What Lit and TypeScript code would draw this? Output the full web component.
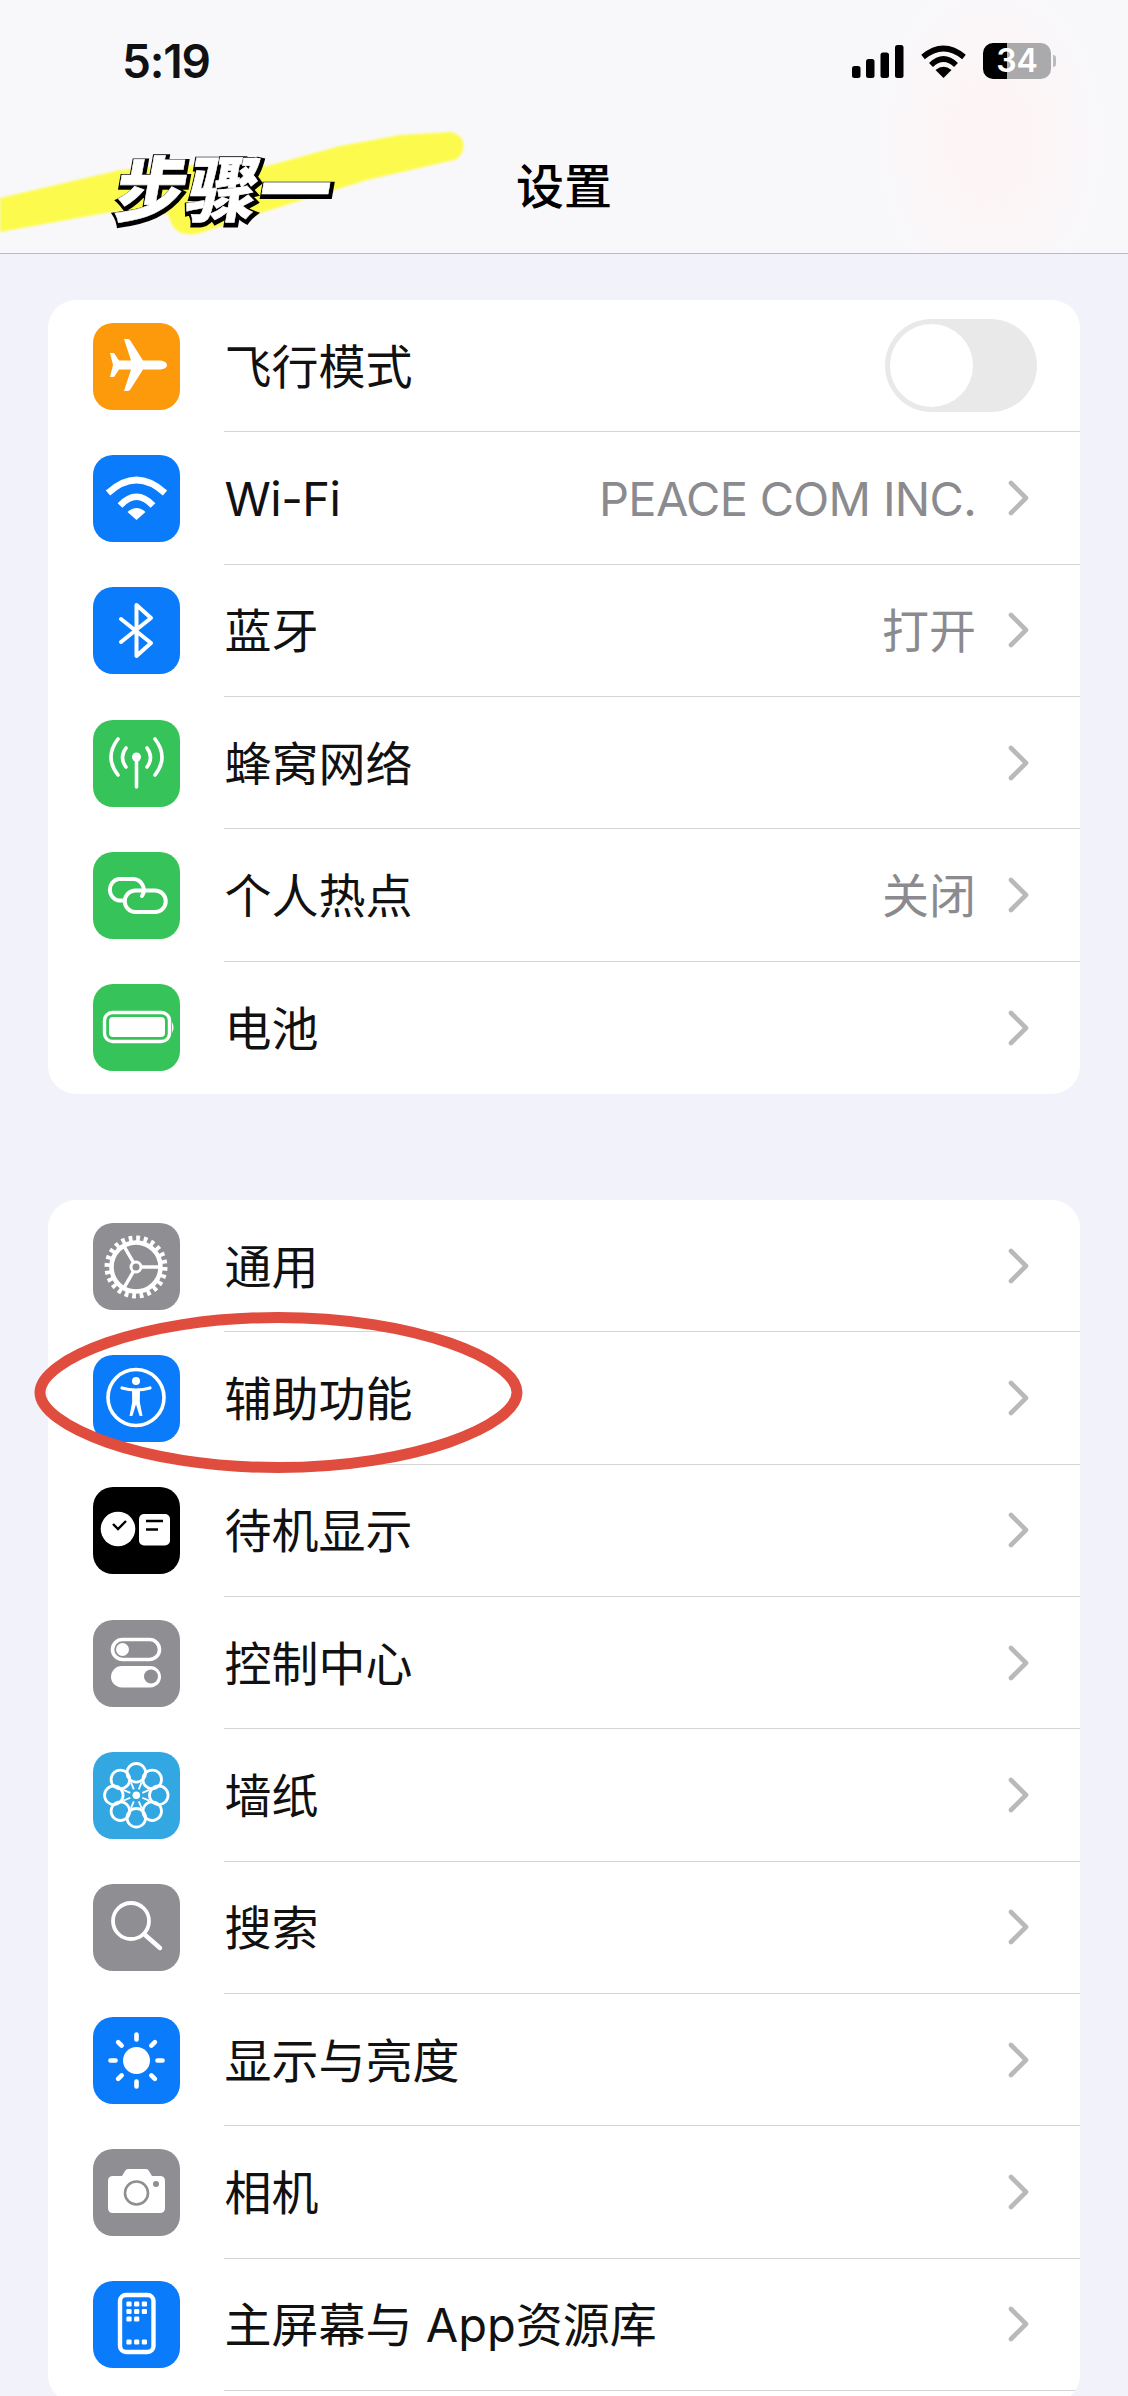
import { LitElement, html, css, svg } from "lit";
import { customElement } from "lit/decorators.js";

const polar = (r: number, deg: number, c = 43.5) => {
  const a = (deg * Math.PI) / 180;
  return [c + r * Math.cos(a), c + r * Math.sin(a)];
};

const eight = [0, 1, 2, 3, 4, 5, 6, 7];

const icons: Record<string, any> = {
  plane: svg`<path fill="#fff" d="M74 42C74 39 70 37.5 66 37.5L50 37.5L37 17Q36 16 34 16L31 16L38 37.5L26 37.5L21 30L17 30L20 42L17 54L21 54L26 46.5L38 46.5L31 68L34 68Q36 68 37 67L50 46.5L66 46.5C70 46.5 74 45 74 42Z"/>`,
  wifi: svg`<g fill="none" stroke="#fff" stroke-width="6.5"><path d="M15 38Q43.5 12 72 38"/><path d="M27 50.5Q43.5 33 60 50.5"/></g><path fill="#fff" d="M34.5 57Q43.5 49 52.5 57L43.5 65Z"/>`,
  bt: svg`<path fill="none" stroke="#fff" stroke-width="4" stroke-linejoin="round" stroke-linecap="round" d="M28 32L58 56L43.5 69V18L58 31L28 55"/>`,
  cell: svg`<g fill="none" stroke="#fff" stroke-width="3.6" stroke-linecap="round"><path d="M33 28Q26 37.5 33 47"/><path d="M25 19Q11 37 25 55"/><path d="M54 28Q61 37.5 54 47"/><path d="M62 19Q76 37 62 55"/><path d="M43.5 38V67"/></g><circle cx="43.5" cy="37" r="4.5" fill="#fff"/>`,
  link: svg`<g fill="none" stroke="#fff" stroke-width="4" stroke-linecap="round"><path d="M31 48.5H25.5A11 11 0 0 1 25.5 27H40A11 11 0 0 1 49 44"/><path d="M62 38.5H42.5A10.7 10.7 0 0 0 42.5 60H62A10.7 10.7 0 0 0 62 38.5Z"/></g>`,
  battery: svg`<rect x="11.5" y="28.5" width="65" height="29" rx="8" fill="none" stroke="#fff" stroke-width="3.4"/><rect x="16" y="33" width="56" height="20" rx="4" fill="#fff"/><path fill="#fff" d="M79 38Q82 43.5 79 49Z"/>`,
  gear: svg`<g fill="none" stroke="#fff"><circle cx="43" cy="44" r="28.5" stroke-width="6" stroke-dasharray="3.73 3.73"/><circle cx="43" cy="44" r="24.5" stroke-width="4.6"/><circle cx="43" cy="44" r="5" stroke-width="3"/><path stroke-width="3.4" d="M48 44H68M40.5 48.3L30.5 65.7M40.5 39.7L30.5 22.3"/></g>`,
  access: svg`<circle cx="43" cy="42.5" r="28" fill="none" stroke="#fff" stroke-width="3.6"/><circle cx="43" cy="26" r="4" fill="#fff"/><path fill="none" stroke="#fff" stroke-width="3.2" stroke-linecap="round" d="M29 33Q43 37 57 33"/><path fill="#fff" d="M39 35H47L46.8 47L49.5 61H46.6L43 49.5L39.4 61H36.5L39.2 47Z"/>`,
  standby: svg`<circle cx="25" cy="42" r="17.3" fill="#fff"/><path fill="none" stroke="#000" stroke-width="2.4" d="M20 37L25 42L33 34"/><rect x="46" y="27" width="31" height="31.5" rx="5" fill="#fff"/><path stroke="#000" stroke-width="2.4" d="M53 34H70M53 42.5H65"/>`,
  control: svg`<rect x="19.5" y="19.5" width="47" height="20" rx="10" fill="none" stroke="#fff" stroke-width="3.6"/><circle cx="29.5" cy="29.5" r="6.5" fill="#fff"/><rect x="18" y="46" width="50" height="21.5" rx="10.7" fill="#fff"/><circle cx="58" cy="56.5" r="7" fill="#8e8e93"/>`,
  flower: svg`${eight.map((i) => {
    const [x, y] = polar(22.5, i * 45 - 90, 43.3);
    return svg`<circle cx="${x}" cy="${y}" r="9.3" fill="none" stroke="#fff" stroke-width="2.8"/>`;
  })}${eight.map((i) => {
    const [a, b] = polar(6.5, i * 45 - 67.5, 43.3);
    const [c, d] = polar(14, i * 45 - 67.5, 43.3);
    return svg`<line x1="${a}" y1="${b}" x2="${c}" y2="${d}" stroke="#fff" stroke-width="1.8"/>`;
  })}<circle cx="43.3" cy="43.3" r="3.8" fill="#fff"/>`,
  search: svg`<g fill="none" stroke="#fff" stroke-linecap="round"><circle cx="38" cy="37" r="18" stroke-width="3.8"/><path stroke-width="4.4" d="M51 50L67 64"/></g>`,
  sun: svg`<circle cx="43.5" cy="43.5" r="13.5" fill="#fff"/>${eight.map((i) => {
    const [a, b] = polar(21, i * 45);
    const [c, d] = polar(26, i * 45);
    return svg`<line x1="${a}" y1="${b}" x2="${c}" y2="${d}" stroke="#fff" stroke-width="4.6" stroke-linecap="round"/>`;
  })}`,
  camera: svg`<path fill="#fff" d="M20 27H29L32 22Q33 20 35 20H53Q55 20 56 22L59 27H67Q72 27 72 32V59Q72 64 67 64H20Q15 64 15 59V32Q15 27 20 27Z"/><circle cx="43.5" cy="44" r="11.5" fill="none" stroke="#8e8e93" stroke-width="2.6"/><circle cx="63" cy="35" r="3" fill="#8e8e93"/>`,
  home: svg`<rect x="27" y="14" width="33.5" height="57" rx="6" fill="none" stroke="#fff" stroke-width="4.4"/>${[
    [36, 23], [43.7, 23], [51.4, 23],
    [36, 30.5], [43.7, 30.5], [51.4, 30.5],
    [36, 38], [43.7, 38],
    [36, 61], [43.7, 61], [51.4, 61],
  ].map(([x, y]) => svg`<rect x="${x - 2.6}" y="${y - 2.4}" width="5.2" height="4.8" rx="1.2" fill="#fff"/>`)}`,
};

type Row = { label: string; icon: string; bg: string; value?: string; toggle?: boolean };

const group1: Row[] = [
  { label: "飞行模式", icon: "plane", bg: "#fd9a0c", toggle: true },
  { label: "Wi-Fi", icon: "wifi", bg: "#0a7cfb", value: "PEACE COM INC." },
  { label: "蓝牙", icon: "bt", bg: "#0a7cfb", value: "打开" },
  { label: "蜂窝网络", icon: "cell", bg: "#36c35a" },
  { label: "个人热点", icon: "link", bg: "#36c35a", value: "关闭" },
  { label: "电池", icon: "battery", bg: "#36c35a" },
];

const group2: Row[] = [
  { label: "通用", icon: "gear", bg: "#8e8e93" },
  { label: "辅助功能", icon: "access", bg: "#0a7cfb" },
  { label: "待机显示", icon: "standby", bg: "#000" },
  { label: "控制中心", icon: "control", bg: "#8e8e93" },
  { label: "墙纸", icon: "flower", bg: "#32a7e2" },
  { label: "搜索", icon: "search", bg: "#8e8e93" },
  { label: "显示与亮度", icon: "sun", bg: "#0a7cfb" },
  { label: "相机", icon: "camera", bg: "#8e8e93" },
  { label: "主屏幕与 App资源库", icon: "home", bg: "#0a7cfb" },
];

const isLatin = (s: string) => /^[\x20-\x7e]+$/.test(s);

@customElement("app-root")
export class AppRoot extends LitElement {
  static styles = css`
    :host {
      display: block;
      position: relative;
      width: 1128px;
      height: 2396px;
      overflow: hidden;
      background: #f2f2fa;
      color: #111;
      font-family: Inter, "Noto Sans CJK SC", sans-serif;
    }
    .header {
      position: relative;
      height: 253px;
      box-sizing: content-box;
      border-bottom: 1px solid #bcbcc0;
      background: radial-gradient(ellipse 120px 170px at 990px 140px, #fdf5f5 30%, rgba(253, 245, 245, 0) 100%), #f8f8fb;
    }
    .status {
      display: flex;
      align-items: center;
      justify-content: space-between;
      height: 36px;
      padding: 43px 72px 0 122px;
    }
    .time {
      font-size: 46px;
      line-height: 36px;
      font-weight: 600;
      letter-spacing: -1.2px;
    }
    .status-icons {
      display: flex;
      align-items: center;
      gap: 17px;
    }
    .status-icons svg {
      display: block;
    }
    .battery {
      position: relative;
      width: 68px;
      height: 36px;
      border-radius: 10px;
      margin-right: 5px;
      background: linear-gradient(90deg, #000 0 24px, #aaaaac 24px);
      color: #fff;
      font-family: Inter, sans-serif;
      font-size: 32px;
      font-weight: 600;
      line-height: 36px;
      text-align: center;
    }
    .battery::after {
      content: "";
      position: absolute;
      left: 70px;
      top: 12px;
      width: 3px;
      height: 12px;
      border-radius: 0 3px 3px 0;
      background: #bbb;
    }
    .nav {
      display: flex;
      justify-content: center;
      margin-top: 84px;
      font-size: 48px;
      line-height: 48px;
      font-weight: 500;
      color: #000;
    }
    .marker {
      position: absolute;
      left: 0;
      top: 0;
      filter: blur(0.8px);
    }
    .sticker {
      position: absolute;
      left: 117px;
      top: 143px;
      font-family: "Noto Sans CJK SC", sans-serif;
      font-size: 71px;
      line-height: 84px;
      font-weight: 900;
      letter-spacing: 1px;
      color: #fff;
      white-space: nowrap;
      transform: skewX(-10deg);
      -webkit-text-stroke: 0.6px #fff;
    }
    .sticker::before {
      content: "步骤一";
      position: absolute;
      left: 1.5px;
      top: 1.5px;
      z-index: -1;
      color: #000;
      -webkit-text-stroke: 6px #000;
    }
    .sticker-wrap {
      position: absolute;
      inset: 0;
      isolation: isolate;
    }
    .list {
      padding: 46px 48px 0;
      display: flex;
      flex-direction: column;
      gap: 106px;
    }
    .card {
      background: #fff;
      border-radius: 28px;
      overflow: hidden;
    }
    .row {
      display: flex;
      align-items: center;
      gap: 46px;
      height: 132.33px;
      padding-left: 45px;
    }
    .icon {
      flex: none;
      width: 87px;
      height: 87px;
      border-radius: 20px;
    }
    .icon svg {
      display: block;
    }
    .body {
      flex: 1;
      height: 100%;
      display: flex;
      align-items: center;
      box-sizing: border-box;
      border-bottom: 1px solid #d4d4d7;
      margin-left: -2px;
      padding: 0 50px 0 0.5px;
    }
    .card .row:last-child .body {
      border-bottom: none;
    }
    .open .row:last-child .body {
      border-bottom: 1px solid #d4d4d7;
    }
    .label {
      flex: 1;
      font-size: 47px;
      line-height: 56px;
      padding-top: 2px;
      white-space: nowrap;
    }
    .label.latin {
      letter-spacing: -0.5px;
    }
    .value {
      font-size: 47px;
      line-height: 56px;
      padding-top: 2px;
      color: #8b8b8f;
      margin-right: 32px;
      white-space: nowrap;
    }
    .value.latin {
      letter-spacing: -0.7px;
    }
    .chevron {
      flex: none;
      display: block;
    }
    .toggle {
      position: relative;
      width: 152px;
      height: 93px;
      margin-right: -7px;
      border-radius: 47px;
      background: #e9e9ea;
    }
    .toggle::before {
      content: "";
      position: absolute;
      left: 5px;
      top: 5px;
      width: 83px;
      height: 83px;
      border-radius: 50%;
      background: #fff;
    }
    .tail {
      height: 12px;
    }
    .oval {
      position: absolute;
      left: 30px;
      top: 1308px;
    }
  `;

  private row(r: Row) {
    return html`<div class="row">
      <div class="icon" style="background:${r.bg}">
        <svg width="87" height="87" viewBox="0 0 87 87">${icons[r.icon]}</svg>
      </div>
      <div class="body">
        <span class="label ${isLatin(r.label) ? "latin" : ""}">${r.label}</span>
        ${r.value ? html`<span class="value ${isLatin(r.value) ? "latin" : ""}">${r.value}</span>` : ""}
        ${r.toggle
          ? html`<div class="toggle"></div>`
          : html`<svg class="chevron" width="22" height="36" viewBox="0 0 22 36">
              <path d="M3 3L18 18L3 33" fill="none" stroke="#b9b9bc" stroke-width="4.6" stroke-linecap="round" stroke-linejoin="round" />
            </svg>`}
      </div>
    </div>`;
  }

  render() {
    return html`
      <header class="header">
        <svg class="marker" width="480" height="250" viewBox="0 0 480 250">
          <path
            fill="#fcfb4d"
            d="M0 198L120 170L180 165L267 166L340 146L400 135L450 132Q466 135 463 150Q460 160 450 161L367 180L267 211L200 233Q180 238 172 225L168 214L117 211L0 232Z"
          />
        </svg>
        <div class="status">
          <span class="time">5:19</span>
          <div class="status-icons">
            <svg width="52" height="33" viewBox="0 0 52 33" fill="#000">
              <rect x="0" y="21" width="8.5" height="12" rx="2.5" />
              <rect x="14" y="14" width="8.5" height="19" rx="2.5" />
              <rect x="28.5" y="7.5" width="8.5" height="25.5" rx="2.5" />
              <rect x="43" y="0" width="8.5" height="33" rx="2.5" />
            </svg>
            <svg width="45" height="33" viewBox="0 0 45 33">
              <g fill="none" stroke="#000" stroke-width="5.6">
                <path d="M2 12Q22.5 -5 43 12" />
                <path d="M10 20Q22.5 8 35 20" />
              </g>
              <path d="M14.5 25Q22.5 18.5 30.5 25L22.5 33Z" fill="#000" />
            </svg>
            <div class="battery">34</div>
          </div>
        </div>
        <div class="nav">设置</div>
        <div class="sticker-wrap"><div class="sticker">步骤一</div></div>
      </header>
      <main class="list">
        <section class="card">${group1.map((r) => this.row(r))}</section>
        <section class="card open">${group2.map((r) => this.row(r))}<div class="tail"></div></section>
      </main>
      <svg class="oval" width="500" height="170" viewBox="0 0 500 170">
        <path
          d="M10 84.5C10 52 110 9.5 248 9.5C385 9.5 487 52 487 84.5C487 117 385 159.5 248 159.5C110 159.5 10 117 10 84.5Z"
          fill="none"
          stroke="#e04d3e"
          stroke-width="11"
        />
      </svg>
    `;
  }
}
